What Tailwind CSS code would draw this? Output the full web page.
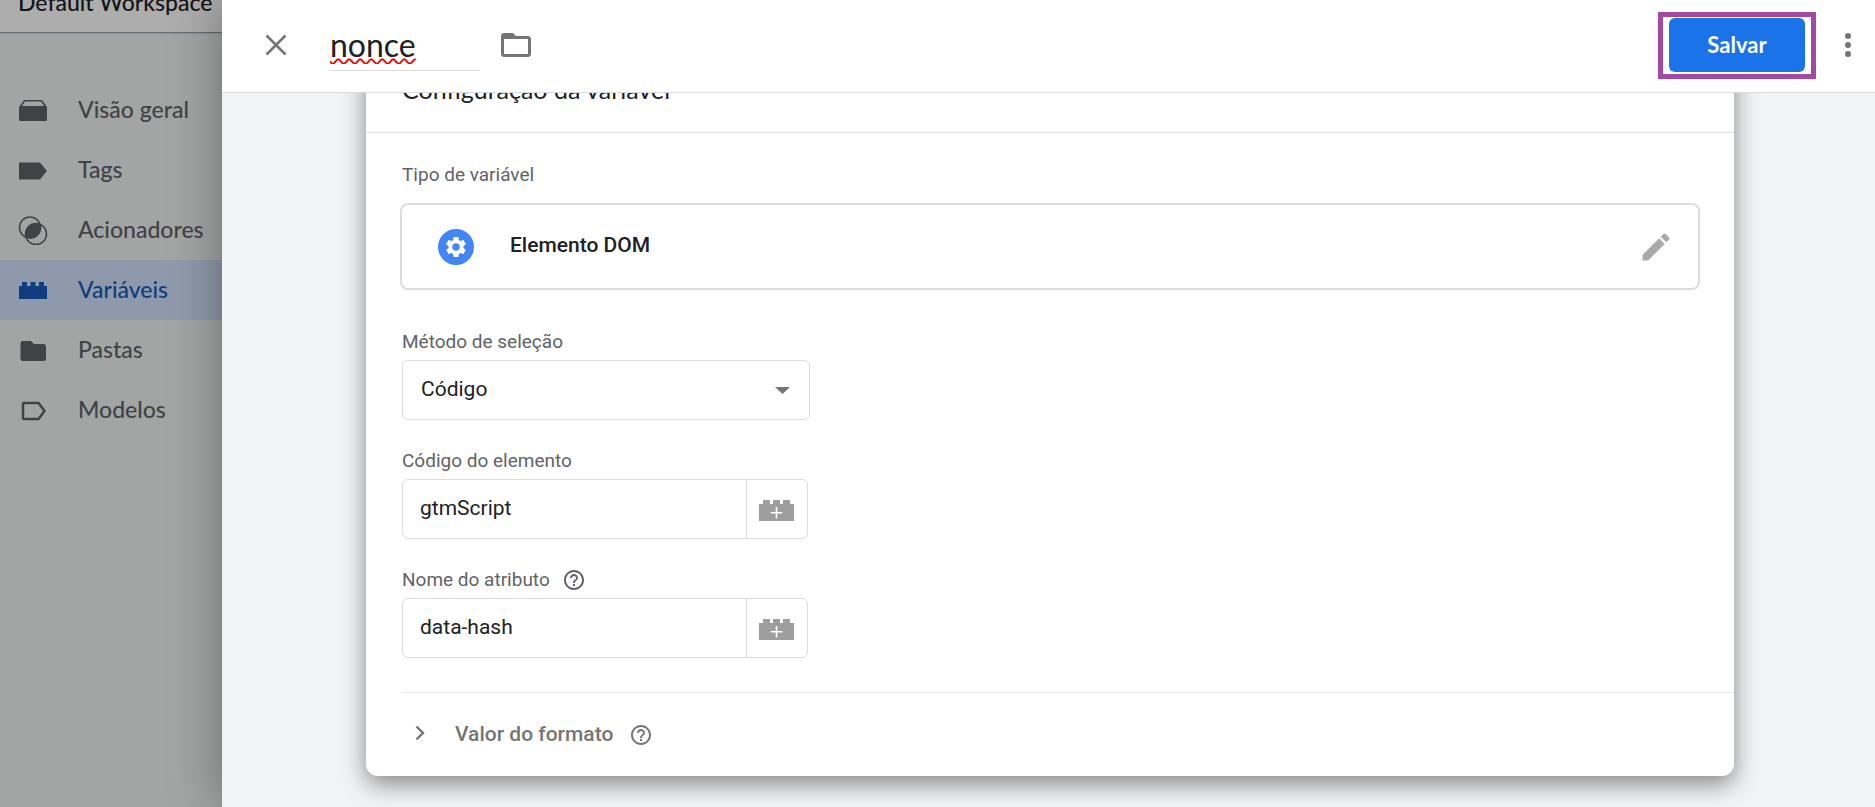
<!DOCTYPE html>
<html lang="pt-BR">
<head>
<meta charset="utf-8">
<meta name="viewport" content="width=device-width, initial-scale=1">
<title>Configuração da variável</title>
<script src="https://cdn.jsdelivr.net/npm/@tailwindcss/browser@4"></script>
</head>
<body class="flex h-screen overflow-hidden bg-[#f1f3f4] font-['Roboto',sans-serif] text-[#202124]">

<svg class="hidden" aria-hidden="true">
  <symbol id="help" viewBox="0 0 24 24"><path fill="currentColor" d="M11 18h2v-2h-2v2zm1-16C6.48 2 2 6.48 2 12s4.480 10 10 10 10-4.480 10-10S17.520 2 12 2zm0 18c-4.410 0-8-3.590-8-8s3.590-8 8-8 8 3.590 8 8-3.590 8-8 8zm0-14c-2.210 0-4 1.790-4 4h2c0-1.100.9-2 2-2s2 .9 2 2c0 2-3 1.750-3 5h2c0-2.250 3-2.500 3-5 0-2.210-1.790-4-4-4z"/></symbol>
  <symbol id="brick-plus" viewBox="0 0 35 21"><path fill="#9e9e9e" d="M0 21V4h4V0h7v4h3V0h7v4h3V0h7v4h4v17z"/><path fill="none" stroke="#fff" stroke-width="1.600" d="M17.500 7v11.500M11.700 12.700h11.600"/></symbol>
</svg>

<aside class="relative w-[222px] shrink-0 font-['Lato',sans-serif] font-medium">
  <div class="flex h-[33px] items-start border-b border-[#9aa0a6] bg-white pl-[18px] shadow-sm">
    <span class="-mt-[10px] text-[23px] leading-6 whitespace-nowrap">Default Workspace</span>
  </div>
  <nav class="mt-[47px] text-[23px] text-[#5f6368]">
    <a href="#" class="flex h-[60px] items-center gap-[30px] pl-[18px]">
      <svg class="h-[30px] w-[30px]" viewBox="0 0 30 30"><path fill="currentColor" fill-rule="evenodd" d="M1 12 6 5h18l5 7v13q0 1-1 1H2q-1 0-1-1zM7 6.500 4 11h22l-3-4.500z"/></svg>
      <span class="pb-0.5">Visão geral</span></a>
    <a href="#" class="flex h-[60px] items-center gap-[30px] pl-[18px]">
      <svg class="h-[30px] w-[30px]" viewBox="0 0 30 30"><path fill="currentColor" d="M1 7.500h21l7 8.500-7 8.500H1z"/></svg>
      <span class="pb-0.5">Tags</span></a>
    <a href="#" class="flex h-[60px] items-center gap-[30px] pl-[18px]">
      <svg class="h-[30px] w-[30px]" viewBox="0 0 30 30"><g fill="none" stroke="currentColor" stroke-width="1.500"><circle cx="12" cy="12.500" r="10.500"/><circle cx="18" cy="19" r="10.500"/></g><path fill="currentColor" d="M22.500 9.300A10.500 10.500 0 0 0 8.300 22.500 10.500 10.500 0 0 0 22.500 9.300z"/></svg>
      <span class="pb-0.5">Acionadores</span></a>
    <a href="#" aria-current="page" class="flex h-[60px] items-center gap-[30px] bg-[#d2e3fc] pl-[18px] text-[#185abc]">
      <svg class="h-[30px] w-[30px]" viewBox="0 0 30 30"><path fill="currentColor" d="M1 24V11h3V7h5v4h3.500V7h5v4H21V7h5v4h3v13z"/></svg>
      <span class="pb-0.5">Variáveis</span></a>
    <a href="#" class="flex h-[60px] items-center gap-[30px] pl-[18px]">
      <svg class="h-[30px] w-[30px]" viewBox="0 0 30 30"><path fill="currentColor" d="M5 6h8l3 3h9.500q2.500 0 2.500 2.500v12q0 2.500-2.500 2.500H5q-2.500 0-2.500-2.500v-15Q2.500 6 5 6z"/></svg>
      <span class="pb-0.5">Pastas</span></a>
    <a href="#" class="flex h-[60px] items-center gap-[30px] pl-[18px]">
      <svg class="h-[30px] w-[30px]" viewBox="0 0 30 30"><path fill="none" stroke="currentColor" stroke-width="2.500" stroke-linejoin="round" d="M6 8h14.500l6 8-6 8H6q-1 0-1-1V9q0-1 1-1z"/></svg>
      <span class="pb-0.5">Modelos</span></a>
  </nav>
  <div class="absolute inset-0 bg-black/32"></div>
</aside>

<div class="relative flex min-w-0 flex-1 flex-col bg-[#f1f3f4] shadow-[0_0_48px_rgba(0,0,0,0.35)]">
  <header class="z-10 flex h-[93px] shrink-0 items-center border-b border-[#dadce0] bg-white pr-[9px] pb-0.5 pl-[36px]">
    <button type="button" aria-label="Fechar" class="flex h-9 w-9 items-center justify-center text-[#757575]">
      <svg class="h-[22px] w-[22px]" viewBox="0 0 22 22"><path fill="none" stroke="currentColor" stroke-width="2.600" d="m1.500 1.500 19 19m0-19-19 19"/></svg>
    </button>
    <div class="ml-9 flex flex-col">
      <label for="name" class="sr-only">Nome da variável</label>
      <input id="name" value="nonce" spellcheck="false" class="h-[52px] w-[150px] border-b border-[#dadce0] bg-transparent font-['Lato',sans-serif] text-[32px] underline decoration-[#f00] decoration-wavy decoration-2 underline-offset-1 outline-none">
    </div>
    <button type="button" aria-label="Pasta" class="ml-[18px] flex h-9 w-9 items-center justify-center text-[#757575]">
      <svg class="h-[36px] w-[36px]" viewBox="0 0 24 24"><path fill="currentColor" d="M20 6h-8l-2-2H4c-1.100 0-1.990.9-1.990 2L2 18c0 1.100.9 2 2 2h16c1.100 0 2-.9 2-2V8c0-1.100-.9-2-2-2zm0 12H4V8h16v10z"/></svg>
    </button>
    <div class="mr-[14px] ml-auto border-[5px] border-[#a349a4] px-[6px] pt-px pb-0.5">
      <button type="button" class="flex h-[54px] w-[136px] items-center justify-center rounded-md bg-[#1a73e8] font-['Lato',sans-serif] text-[22px] font-bold text-white">Salvar</button>
    </div>
    <button type="button" aria-label="Mais opções" class="flex h-9 w-9 items-center justify-center text-[#757575]">
      <svg class="h-6 w-[6px]" viewBox="0 0 6 24" fill="currentColor"><circle cx="3" cy="3" r="3"/><circle cx="3" cy="12" r="3"/><circle cx="3" cy="21" r="3"/></svg>
    </button>
  </header>

  <main class="min-h-0 flex-1 overflow-hidden pr-[141px] pl-[144px]">
    <section class="-mt-8 rounded-xl bg-white shadow-[0_8px_24px_rgba(0,0,0,0.45)]">
      <div class="flex h-[72px] items-start border-b border-[#dadce0] px-9 pt-3">
        <h2 class="font-['Lato',sans-serif] text-[25px] leading-8">Configuração da variável</h2>
      </div>
      <div class="px-[34px] pt-[30px]">
        <h3 class="h-6 pl-0.5 text-[19px] leading-6 text-[#5f6368]">Tipo de variável</h3>
        <div class="mt-4 flex h-[87px] items-center rounded-lg border-2 border-[#dadce0] pr-6 pl-9">
          <svg class="h-9 w-9" viewBox="0 0 36 36"><circle cx="18" cy="18" r="18" fill="#4285f4"/><path fill="#fff" transform="translate(5.500 5.500) scale(1.042)" d="M19.140 12.940c.04-.3.06-.61.06-.94 0-.32-.02-.64-.07-.94l2.030-1.580c.18-.14.23-.41.12-.61l-1.920-3.320c-.12-.22-.37-.29-.59-.22l-2.390.96c-.5-.38-1.030-.7-1.620-.94l-.36-2.540c-.04-.24-.24-.41-.48-.41h-3.840c-.24 0-.43.17-.47.41l-.36 2.540c-.59.24-1.130.57-1.620.94l-2.390-.96c-.22-.08-.47 0-.59.22L2.740 8.870c-.12.21-.08.47.12.61l2.030 1.580c-.05.3-.09.63-.09.94s.02.64.07.94l-2.030 1.580c-.18.14-.23.41-.12.61l1.920 3.320c.12.22.37.29.59.22l2.390-.96c.5.38 1.030.7 1.620.94l.36 2.540c.05.24.24.41.48.41h3.840c.24 0 .44-.17.47-.41l.36-2.540c.59-.24 1.130-.56 1.620-.94l2.390.96c.22.08.47 0 .59-.22l1.920-3.320c.12-.22.07-.47-.12-.61l-2.010-1.580zM12 15.600c-1.980 0-3.600-1.620-3.600-3.600s1.620-3.600 3.600-3.600 3.600 1.620 3.600 3.600-1.620 3.600-3.600 3.600z"/></svg>
          <span class="ml-9 pb-1 text-[21px] leading-7 font-medium">Elemento DOM</span>
          <button type="button" aria-label="Editar tipo" class="ml-auto flex h-9 w-9 items-center justify-center text-[#aaa]">
            <svg class="h-9 w-9" viewBox="0 0 24 24"><path fill="currentColor" d="M3 17.250V21h3.750L17.810 9.940l-3.750-3.750L3 17.250zM20.710 7.040c.39-.39.39-1.020 0-1.410l-2.340-2.340c-.39-.39-1.020-.39-1.410 0l-1.830 1.830 3.750 3.750 1.830-1.830z"/></svg>
          </button>
        </div>
      </div>
      <div class="flex flex-col gap-[29px] pt-[40px] pl-9">
        <div>
          <label for="method" class="block h-[30px] text-[19px] leading-6 text-[#5f6368]">Método de seleção</label>
          <div class="relative w-[408px]">
            <select id="method" class="h-[60px] w-full appearance-none rounded-md border border-[#dadce0] bg-white px-[18px] text-[21px]"><option>Código</option></select>
            <svg class="pointer-events-none absolute top-[27px] right-5 h-[7px] w-[15px]" viewBox="0 0 15 7"><path fill="#757575" d="M0 0h15L7.500 7z"/></svg>
          </div>
        </div>
        <div>
          <label for="code" class="block h-[30px] text-[19px] leading-6 text-[#5f6368]">Código do elemento</label>
          <div class="flex h-[60px] w-[406px] rounded-md border border-[#dadce0]">
            <input id="code" value="gtmScript" class="min-w-0 flex-1 bg-transparent px-[17px] text-[21px] outline-none">
            <button type="button" aria-label="Inserir variável no código" class="flex w-[61px] items-center justify-center border-l border-[#dadce0] pt-0.5 pr-0.5"><svg class="h-[21px] w-[35px]"><use href="#brick-plus"/></svg></button>
          </div>
        </div>
        <div>
          <div class="flex h-[30px] items-start gap-3 text-[#5f6368]">
            <label for="attr" class="text-[19px] leading-6">Nome do atributo</label>
            <svg class="h-6 w-6" role="img" aria-label="Ajuda"><use href="#help"/></svg>
          </div>
          <div class="flex h-[60px] w-[406px] rounded-md border border-[#dadce0]">
            <input id="attr" value="data-hash" class="min-w-0 flex-1 bg-transparent px-[17px] text-[21px] outline-none">
            <button type="button" aria-label="Inserir variável no atributo" class="flex w-[61px] items-center justify-center border-l border-[#dadce0] pt-0.5 pr-0.5"><svg class="h-[21px] w-[35px]"><use href="#brick-plus"/></svg></button>
          </div>
        </div>
      </div>
      <div class="mt-[34px] ml-9 flex h-[84px] items-center border-t border-[#e8eaed] pl-[10px] text-[#757575]">
        <button type="button" aria-expanded="false" class="flex items-center gap-[27px] text-[21px] font-medium">
          <svg class="mb-1 h-4 w-4" viewBox="0 0 16 16"><path fill="none" stroke="currentColor" stroke-width="2.400" d="m4.500 1.500 6.500 6.500-6.500 6.500"/></svg>
          Valor do formato</button>
        <svg class="ml-4 h-6 w-6" role="img" aria-label="Ajuda"><use href="#help"/></svg>
      </div>
    </section>
  </main>
</div>
</body>
</html>
